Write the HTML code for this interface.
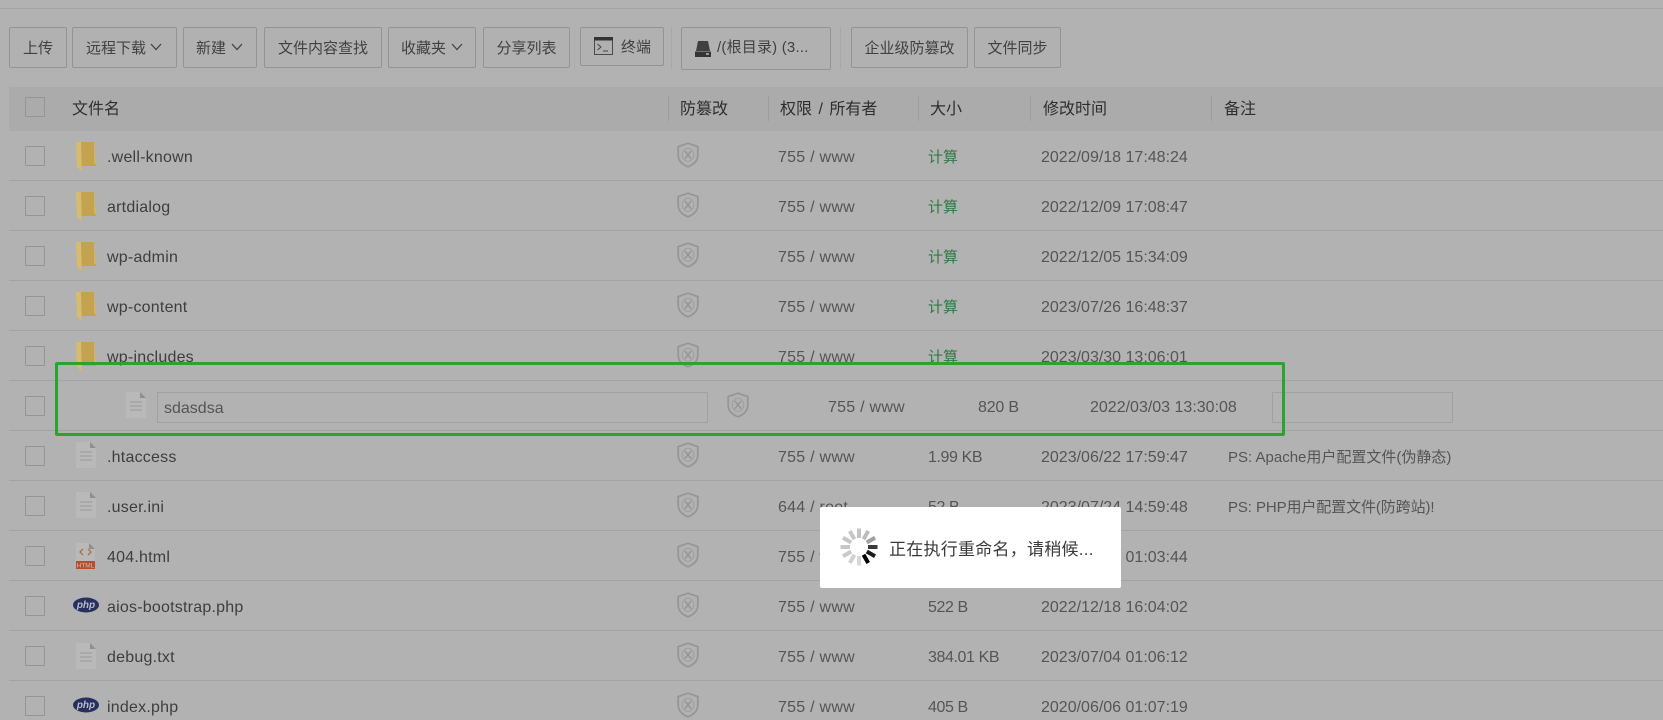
<!DOCTYPE html>
<html lang="zh"><head><meta charset="utf-8"><title>文件管理</title>
<style>
html,body{margin:0;padding:0;background:#b2b2b2}
body{width:1663px;height:718px;position:relative;overflow:hidden;font-family:"Liberation Sans","Noto Sans CJK SC",sans-serif;font-size:16px;color:#555}
.a{position:absolute;white-space:nowrap}
.b{position:absolute;top:27px;height:39px;line-height:41px;border:1px solid #949494;border-radius:2px;box-sizing:content-box;text-align:center;font-size:15px;color:#414141;background:#b1b1b1}
.b svg{position:absolute}
.sep{position:absolute;top:27px;height:42px;width:1px;background:#a8a8a8}
.hd{position:absolute;left:9px;top:87px;width:1654px;height:44px;background:#ababab}
.h{position:absolute;top:98px;line-height:24px;font-size:16px;color:#2e2e2e;word-spacing:2px}
.hs{position:absolute;top:96px;height:25px;width:1px;background:#9d9d9d}
.l{position:absolute;left:9px;width:1654px;height:1px;background:#a3a3a3}
.c{position:absolute;left:25px;width:18px;height:18px;border:1px solid #959595;border-radius:1px}
.t{position:absolute;line-height:24px;white-space:nowrap;height:24px;transform:translateY(2px)}
.n{left:107px;color:#3e3e3e;letter-spacing:.22px}
.p{left:778px;letter-spacing:.25px}.s{left:928px;letter-spacing:-.4px}.d{left:1041px}.r{left:1228px;font-size:15px}
.g{color:#2e7a45;font-size:15px;font-weight:400;letter-spacing:0}
.i{position:absolute}
.in{position:absolute;border:1px solid #a1a1a1;box-sizing:border-box}
</style></head><body>
<svg width="0" height="0" style="position:absolute">
<symbol id="sh" viewBox="0 0 22 26"><path d="M11 1.2 20.8 4.6V13C20.800 19 16 22.800 11 24.800 6 22.800 1.200 19 1.200 13V4.600Z" fill="none" stroke="#969696" stroke-width="1.800"/><ellipse cx="11" cy="12.800" rx="5.800" ry="6.500" fill="none" stroke="#9e9e9e" stroke-width="1"/><path d="M7.800 8.800 14.200 16.800M14.200 8.800 7.800 16.800" stroke="#939393" stroke-width="1.300" fill="none"/></symbol>
<symbol id="fo" viewBox="0 0 20 30"><path d="M0 1H18L20 20V25H6L5.500 30 1 26Z" fill="#d1b566"/><path d="M5 1H18V22L20 24V25H6Z" fill="#c3a350"/><path d="M0 1H5V25L5.500 30 1 26Z" fill="#d6bc70"/></symbol>
<symbol id="fi" viewBox="0 0 20 26"><path d="M0 0H14L20 6V26H0Z" fill="#b9b9b9"/><path d="M14 0 20 6H14Z" fill="#8f8f8f"/><path d="M4 10H16M4 14H16M4 18H16" stroke="#a0a0a0" stroke-width="1.200"/></symbol>
<symbol id="ph" viewBox="0 0 26 16"><ellipse cx="13" cy="8" rx="13" ry="7.500" fill="#272f5f"/><text x="13" y="11" font-family="Liberation Sans,sans-serif" font-size="10" font-style="italic" font-weight="700" fill="#b9bbc9" text-anchor="middle">php</text></symbol>
<symbol id="ch" viewBox="0 0 12 8"><path d="M1 1 6 6.500 11 1" fill="none" stroke="#444" stroke-width="1.300"/></symbol>
</svg>

<div class="l" style="top:8px;left:0;width:1663px"></div>

<div class="b" style="left:9px;width:56px">上传</div>
<div class="b" style="left:72px;width:103px;text-align:left;text-indent:13px">远程下载<svg style="left:77px;top:15px" width="12" height="8"><use href="#ch"/></svg></div>
<div class="b" style="left:183px;width:72px;text-align:left;text-indent:12px">新建<svg style="left:47px;top:15px" width="12" height="8"><use href="#ch"/></svg></div>
<div class="b" style="left:264px;width:116px">文件内容查找</div>
<div class="b" style="left:388px;width:86px;text-align:left;text-indent:12px">收藏夹<svg style="left:62px;top:15px" width="12" height="8"><use href="#ch"/></svg></div>
<div class="b" style="left:483px;width:85px">分享列表</div>
<div class="sep" style="left:574px;background:#acacac"></div>
<div class="b" style="left:580px;width:82px;height:37px;line-height:39px;text-align:left;text-indent:40px">终端<svg style="left:13px;top:9px" width="19" height="18" viewBox="0 0 19 18"><rect x=".5" y=".5" width="18" height="17" fill="#b0b0b0" stroke="#4a4a4a"/><rect x="0" y="0" width="19" height="3.500" fill="#333"/><path d="M3.500 7 7 10 3.500 13" fill="none" stroke="#444"/><path d="M9 14H14" stroke="#444"/></svg></div>
<div class="sep" style="left:671px"></div>
<div class="b" style="left:681px;width:148px;height:41px;line-height:40px;text-align:left;text-indent:35px;letter-spacing:.2px">/(根目录) (3...<svg style="left:13px;top:13px" width="16" height="16" viewBox="0 0 16 16"><path d="M3 0H13L15 10H1Z" fill="#404040"/><rect x="0" y="10.500" width="16" height="5.500" fill="#353535"/><rect x="11" y="12" width="3" height="2" fill="#999"/></svg></div>
<div class="sep" style="left:840px"></div>
<div class="b" style="left:851px;width:115px">企业级防篡改</div>
<div class="b" style="left:974px;width:85px">文件同步</div>

<div class="hd"></div>
<div class="c" style="top:97px"></div>
<div class="h" style="left:72px">文件名</div>
<div class="hs" style="left:668px"></div><div class="h" style="left:680px">防篡改</div>
<div class="hs" style="left:768px"></div><div class="h" style="left:780px">权限 / 所有者</div>
<div class="hs" style="left:918px"></div><div class="h" style="left:930px">大小</div>
<div class="hs" style="left:1030px"></div><div class="h" style="left:1043px">修改时间</div>
<div class="hs" style="left:1211px"></div><div class="h" style="left:1224px">备注</div>

<!-- lines -->
<div class="l" style="top:180px"></div><div class="l" style="top:230px"></div><div class="l" style="top:280px"></div><div class="l" style="top:330px"></div><div class="l" style="top:380px"></div><div class="l" style="top:430px"></div><div class="l" style="top:480px"></div><div class="l" style="top:530px"></div><div class="l" style="top:580px"></div><div class="l" style="top:630px"></div><div class="l" style="top:680px"></div>

<!-- row 0 -->
<div class="c" style="top:146px"></div><svg class="i" style="left:76px;top:141px" width="20" height="30"><use href="#fo"/></svg><div class="t n" style="top:144px">.well-known</div><svg class="i" style="left:677px;top:142px" width="22" height="26"><use href="#sh"/></svg><div class="t p" style="top:144px">755 / www</div><div class="t s g" style="top:144px">计算</div><div class="t d" style="top:144px">2022/09/18 17:48:24</div>
<!-- row 1 -->
<div class="c" style="top:196px"></div><svg class="i" style="left:76px;top:191px" width="20" height="30"><use href="#fo"/></svg><div class="t n" style="top:194px">artdialog</div><svg class="i" style="left:677px;top:192px" width="22" height="26"><use href="#sh"/></svg><div class="t p" style="top:194px">755 / www</div><div class="t s g" style="top:194px">计算</div><div class="t d" style="top:194px">2022/12/09 17:08:47</div>
<!-- row 2 -->
<div class="c" style="top:246px"></div><svg class="i" style="left:76px;top:241px" width="20" height="30"><use href="#fo"/></svg><div class="t n" style="top:244px">wp-admin</div><svg class="i" style="left:677px;top:242px" width="22" height="26"><use href="#sh"/></svg><div class="t p" style="top:244px">755 / www</div><div class="t s g" style="top:244px">计算</div><div class="t d" style="top:244px">2022/12/05 15:34:09</div>
<!-- row 3 -->
<div class="c" style="top:296px"></div><svg class="i" style="left:76px;top:291px" width="20" height="30"><use href="#fo"/></svg><div class="t n" style="top:294px">wp-content</div><svg class="i" style="left:677px;top:292px" width="22" height="26"><use href="#sh"/></svg><div class="t p" style="top:294px">755 / www</div><div class="t s g" style="top:294px">计算</div><div class="t d" style="top:294px">2023/07/26 16:48:37</div>
<!-- row 4 -->
<div class="c" style="top:346px"></div><svg class="i" style="left:76px;top:341px" width="20" height="30"><use href="#fo"/></svg><div class="t n" style="top:344px">wp-includes</div><svg class="i" style="left:677px;top:342px" width="22" height="26"><use href="#sh"/></svg><div class="t p" style="top:344px">755 / www</div><div class="t s g" style="top:344px">计算</div><div class="t d" style="top:344px">2023/03/30 13:06:01</div>
<!-- row 5 rename -->
<div class="c" style="top:396px"></div><svg class="i" style="left:126px;top:392px" width="20" height="26"><use href="#fi"/></svg>
<div class="in" style="left:157px;top:392px;width:551px;height:31px"></div><div class="t" style="left:164px;top:395px;color:#555">sdasdsa</div>
<svg class="i" style="left:727px;top:392px" width="22" height="26"><use href="#sh"/></svg><div class="t" style="left:828px;top:394px;letter-spacing:.25px">755 / www</div><div class="t" style="left:978px;top:394px;letter-spacing:-.2px">820 B</div><div class="t" style="left:1090px;top:394px">2022/03/03 13:30:08</div>
<div class="in" style="left:1272px;top:392px;width:181px;height:31px"></div>
<!-- row 6 -->
<div class="c" style="top:446px"></div><svg class="i" style="left:76px;top:442px" width="20" height="26"><use href="#fi"/></svg><div class="t n" style="top:444px">.htaccess</div><svg class="i" style="left:677px;top:442px" width="22" height="26"><use href="#sh"/></svg><div class="t p" style="top:444px">755 / www</div><div class="t s" style="top:444px">1.99 KB</div><div class="t d" style="top:444px">2023/06/22 17:59:47</div><div class="t r" style="top:444px">PS: Apache用户配置文件(伪静态)</div>
<!-- row 7 -->
<div class="c" style="top:496px"></div><svg class="i" style="left:76px;top:492px" width="20" height="26"><use href="#fi"/></svg><div class="t n" style="top:494px">.user.ini</div><svg class="i" style="left:677px;top:492px" width="22" height="26"><use href="#sh"/></svg><div class="t p" style="top:494px">644 / root</div><div class="t s" style="top:494px">52 B</div><div class="t d" style="top:494px">2023/07/24 14:59:48</div><div class="t r" style="top:494px;letter-spacing:-.1px">PS: PHP用户配置文件(防跨站)!</div>
<!-- row 8 -->
<div class="c" style="top:546px"></div>
<svg class="i" style="left:76px;top:543px" width="19" height="26" viewBox="0 0 19 26"><path d="M0 0H13L19 6V26H0Z" fill="#b9b9b9"/><path d="M13 0 19 6H13Z" fill="#8f8f8f"/><rect x="0" y="18" width="19" height="8" fill="#b5502c"/><path d="M7 6 4 9 7 12M12 6 15 9 12 12" fill="none" stroke="#a8673f" stroke-width="1.200"/><text x="9.500" y="24.500" font-family="Liberation Sans,sans-serif" font-size="6.500" fill="#d8b9ab" text-anchor="middle">HTML</text></svg>
<div class="t n" style="top:544px">404.html</div><svg class="i" style="left:677px;top:542px" width="22" height="26"><use href="#sh"/></svg><div class="t p" style="top:544px">755 / www</div><div class="t s" style="top:544px">1.2 KB</div><div class="t d" style="top:544px">2023/07/05 01:03:44</div>
<!-- row 9 -->
<div class="c" style="top:596px"></div><svg class="i" style="left:73px;top:597px" width="26" height="16"><use href="#ph"/></svg><div class="t n" style="top:594px">aios-bootstrap.php</div><svg class="i" style="left:677px;top:592px" width="22" height="26"><use href="#sh"/></svg><div class="t p" style="top:594px">755 / www</div><div class="t s" style="top:594px">522 B</div><div class="t d" style="top:594px">2022/12/18 16:04:02</div>
<!-- row 10 -->
<div class="c" style="top:646px"></div><svg class="i" style="left:76px;top:643px" width="20" height="26"><use href="#fi"/></svg><div class="t n" style="top:644px">debug.txt</div><svg class="i" style="left:677px;top:642px" width="22" height="26"><use href="#sh"/></svg><div class="t p" style="top:644px">755 / www</div><div class="t s" style="top:644px">384.01 KB</div><div class="t d" style="top:644px">2023/07/04 01:06:12</div>
<!-- row 11 -->
<div class="c" style="top:696px"></div><svg class="i" style="left:73px;top:697px" width="26" height="16"><use href="#ph"/></svg><div class="t n" style="top:694px">index.php</div><svg class="i" style="left:677px;top:692px" width="22" height="26"><use href="#sh"/></svg><div class="t p" style="top:694px">755 / www</div><div class="t s" style="top:694px">405 B</div><div class="t d" style="top:694px">2020/06/06 01:07:19</div>

<!-- green annotation -->
<div class="a" style="left:55px;top:362px;width:1230px;height:74px;box-sizing:border-box;border:3px solid #29a52e;border-radius:2px"></div>

<!-- loading modal -->
<div class="a" style="left:820px;top:507px;width:301px;height:81px;background:#fff;border-radius:2px"></div>
<svg class="a" style="left:839px;top:527px" width="40" height="40" viewBox="-20 -20 40 40">
<g stroke-width="4" stroke-linecap="butt">
<path d="M0-18.500V-9" stroke="#c4c4c4"/>
<path d="M0-18.500V-9" stroke="#bcbcbc" transform="rotate(30)"/>
<path d="M0-18.500V-9" stroke="#a0a0a0" transform="rotate(60)"/>
<path d="M0-18.500V-9" stroke="#3a3a3a" transform="rotate(90)"/>
<path d="M0-18.500V-9" stroke="#1c1c1c" transform="rotate(120)"/>
<path d="M0-18.500V-9" stroke="#000" transform="rotate(150)"/>
<path d="M0-18.500V-9" stroke="#d8d8d8" transform="rotate(180)"/>
<path d="M0-18.500V-9" stroke="#d2d2d2" transform="rotate(210)"/>
<path d="M0-18.500V-9" stroke="#cacaca" transform="rotate(240)"/>
<path d="M0-18.500V-9" stroke="#c6c6c6" transform="rotate(270)"/>
<path d="M0-18.500V-9" stroke="#c6c6c6" transform="rotate(300)"/>
<path d="M0-18.500V-9" stroke="#c6c6c6" transform="rotate(330)"/>
</g></svg>
<div class="a" style="left:889px;top:538px;line-height:24px;font-size:17px;color:#3a3a3a;letter-spacing:.25px">正在执行重命名，请稍候...</div>
</body></html>
